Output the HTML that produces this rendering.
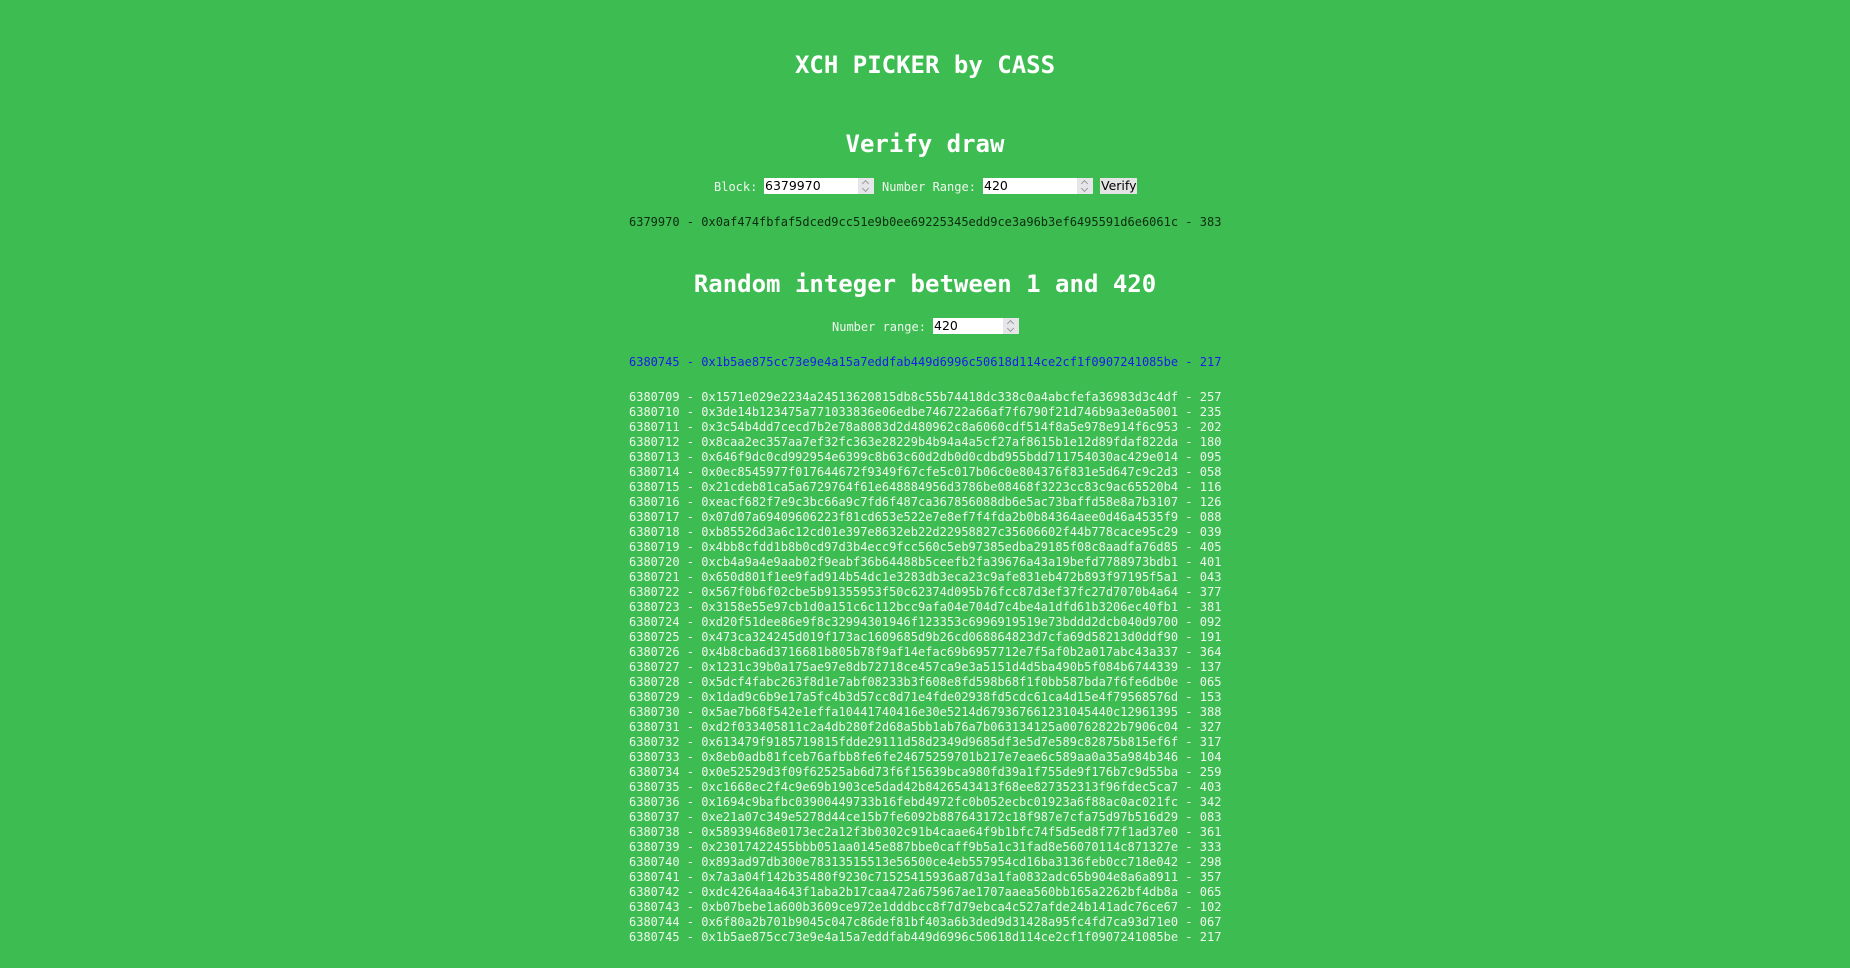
<!DOCTYPE html>
<html><head><meta charset="utf-8"><style>
html,body{margin:0;padding:0;}
body{width:1850px;height:968px;background:#3dbd51;position:relative;overflow:hidden;font-family:"DejaVu Sans Mono","Liberation Mono",monospace;color:#eef8ee;}
.h{position:absolute;left:0;width:1850px;text-align:center;font-weight:bold;font-size:24px;line-height:30px;color:#fff;}
.t{position:absolute;font-size:12px;line-height:15px;white-space:pre;}
.inp{position:absolute;height:16px;background:#fff;color:#000;font-family:"DejaVu Sans","Liberation Sans",sans-serif;font-size:12.5px;line-height:16px;box-sizing:border-box;padding-left:1px;}
.sp{position:absolute;right:0;top:0;width:16px;height:16px;background:#e6e6ea;}
.sp:before{content:"";position:absolute;left:5px;top:3px;width:4px;height:4px;border-left:1px solid #999;border-top:1px solid #999;transform:rotate(45deg);}
.sp:after{content:"";position:absolute;left:5px;top:8px;width:4px;height:4px;border-right:1px solid #999;border-bottom:1px solid #999;transform:rotate(45deg);}
.btn{position:absolute;background:#e4e4e4;color:#000;font-family:"DejaVu Sans","Liberation Sans",sans-serif;font-size:12.5px;line-height:16px;height:16px;padding:0 1px;}
#list{position:absolute;left:629px;top:390px;font-size:12px;line-height:15px;white-space:pre;}
</style></head><body>
<div class="h" style="top:50px">XCH PICKER by CASS</div>
<div class="h" style="top:129px">Verify draw</div>
<div class="t" style="left:714px;top:180px">Block:</div>
<div class="inp" style="left:764px;top:178px;width:110px">6379970<div class="sp"></div></div>
<div class="t" style="left:882px;top:180px">Number Range:</div>
<div class="inp" style="left:983px;top:178px;width:110px">420<div class="sp"></div></div>
<div class="btn" style="left:1100px;top:178px">Verify</div>
<div class="t" style="left:629px;top:215px;color:#0d2b12">6379970 - 0x0af474fbfaf5dced9cc51e9b0ee69225345edd9ce3a96b3ef6495591d6e6061c - 383</div>
<div class="h" style="top:269px">Random integer between 1 and 420</div>
<div class="t" style="left:832px;top:320px">Number range:</div>
<div class="inp" style="left:933px;top:318px;width:86px">420<div class="sp"></div></div>
<div class="t" style="left:629px;top:355px;color:#1a1aee">6380745 - 0x1b5ae875cc73e9e4a15a7eddfab449d6996c50618d114ce2cf1f0907241085be - 217</div>
<div id="list">6380709 - 0x1571e029e2234a24513620815db8c55b74418dc338c0a4abcfefa36983d3c4df - 257
6380710 - 0x3de14b123475a771033836e06edbe746722a66af7f6790f21d746b9a3e0a5001 - 235
6380711 - 0x3c54b4dd7cecd7b2e78a8083d2d480962c8a6060cdf514f8a5e978e914f6c953 - 202
6380712 - 0x8caa2ec357aa7ef32fc363e28229b4b94a4a5cf27af8615b1e12d89fdaf822da - 180
6380713 - 0x646f9dc0cd992954e6399c8b63c60d2db0d0cdbd955bdd711754030ac429e014 - 095
6380714 - 0x0ec8545977f017644672f9349f67cfe5c017b06c0e804376f831e5d647c9c2d3 - 058
6380715 - 0x21cdeb81ca5a6729764f61e648884956d3786be08468f3223cc83c9ac65520b4 - 116
6380716 - 0xeacf682f7e9c3bc66a9c7fd6f487ca367856088db6e5ac73baffd58e8a7b3107 - 126
6380717 - 0x07d07a69409606223f81cd653e522e7e8ef7f4fda2b0b84364aee0d46a4535f9 - 088
6380718 - 0xb85526d3a6c12cd01e397e8632eb22d22958827c35606602f44b778cace95c29 - 039
6380719 - 0x4bb8cfdd1b8b0cd97d3b4ecc9fcc560c5eb97385edba29185f08c8aadfa76d85 - 405
6380720 - 0xcb4a9a4e9aab02f9eabf36b64488b5ceefb2fa39676a43a19befd7788973bdb1 - 401
6380721 - 0x650d801f1ee9fad914b54dc1e3283db3eca23c9afe831eb472b893f97195f5a1 - 043
6380722 - 0x567f0b6f02cbe5b91355953f50c62374d095b76fcc87d3ef37fc27d7070b4a64 - 377
6380723 - 0x3158e55e97cb1d0a151c6c112bcc9afa04e704d7c4be4a1dfd61b3206ec40fb1 - 381
6380724 - 0xd20f51dee86e9f8c32994301946f123353c6996919519e73bddd2dcb040d9700 - 092
6380725 - 0x473ca324245d019f173ac1609685d9b26cd068864823d7cfa69d58213d0ddf90 - 191
6380726 - 0x4b8cba6d3716681b805b78f9af14efac69b6957712e7f5af0b2a017abc43a337 - 364
6380727 - 0x1231c39b0a175ae97e8db72718ce457ca9e3a5151d4d5ba490b5f084b6744339 - 137
6380728 - 0x5dcf4fabc263f8d1e7abf08233b3f608e8fd598b68f1f0bb587bda7f6fe6db0e - 065
6380729 - 0x1dad9c6b9e17a5fc4b3d57cc8d71e4fde02938fd5cdc61ca4d15e4f79568576d - 153
6380730 - 0x5ae7b68f542e1effa10441740416e30e5214d679367661231045440c12961395 - 388
6380731 - 0xd2f033405811c2a4db280f2d68a5bb1ab76a7b063134125a00762822b7906c04 - 327
6380732 - 0x613479f9185719815fdde29111d58d2349d9685df3e5d7e589c82875b815ef6f - 317
6380733 - 0x8eb0adb81fceb76afbb8fe6fe24675259701b217e7eae6c589aa0a35a984b346 - 104
6380734 - 0x0e52529d3f09f62525ab6d73f6f15639bca980fd39a1f755de9f176b7c9d55ba - 259
6380735 - 0xc1668ec2f4c9e69b1903ce5dad42b8426543413f68ee827352313f96fdec5ca7 - 403
6380736 - 0x1694c9bafbc03900449733b16febd4972fc0b052ecbc01923a6f88ac0ac021fc - 342
6380737 - 0xe21a07c349e5278d44ce15b7fe6092b887643172c18f987e7cfa75d97b516d29 - 083
6380738 - 0x58939468e0173ec2a12f3b0302c91b4caae64f9b1bfc74f5d5ed8f77f1ad37e0 - 361
6380739 - 0x23017422455bbb051aa0145e887bbe0caff9b5a1c31fad8e56070114c871327e - 333
6380740 - 0x893ad97db300e78313515513e56500ce4eb557954cd16ba3136feb0cc718e042 - 298
6380741 - 0x7a3a04f142b35480f9230c71525415936a87d3a1fa0832adc65b904e8a6a8911 - 357
6380742 - 0xdc4264aa4643f1aba2b17caa472a675967ae1707aaea560bb165a2262bf4db8a - 065
6380743 - 0xb07bebe1a600b3609ce972e1dddbcc8f7d79ebca4c527afde24b141adc76ce67 - 102
6380744 - 0x6f80a2b701b9045c047c86def81bf403a6b3ded9d31428a95fc4fd7ca93d71e0 - 067
6380745 - 0x1b5ae875cc73e9e4a15a7eddfab449d6996c50618d114ce2cf1f0907241085be - 217</div>
</body></html>
